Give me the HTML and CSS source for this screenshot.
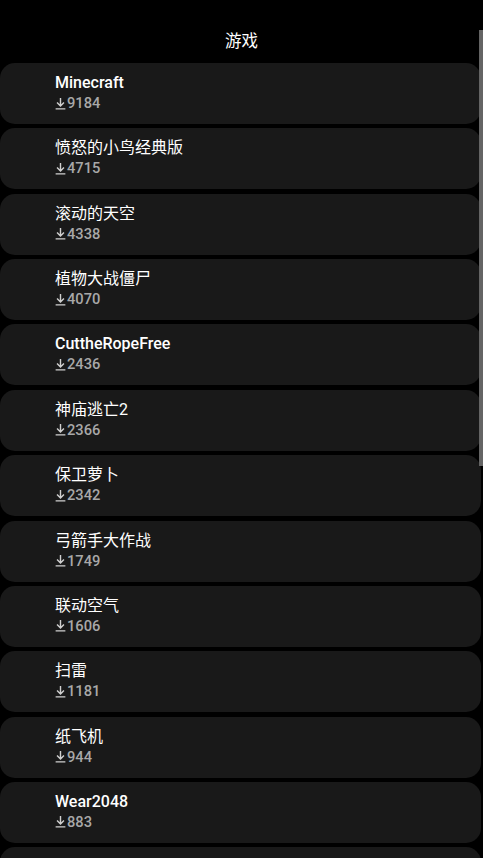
FILE: index.html
```html
<!DOCTYPE html>
<html lang="zh">
<head>
<meta charset="utf-8">
<title>游戏</title>
<link rel="stylesheet" href="styles.css">
</head>
<body>
<div class="screen">
  <header class="header">游戏</header>
  <ul class="list">
    <li class="card"><div class="name">Minecraft</div><div class="count"><svg class="dl" viewBox="0 0 10 12"><path d="M5 1v7M1.8 5l3.2 3.2L8.2 5M0.5 11h9" /></svg>9184</div></li>
    <li class="card"><div class="name cjk">愤怒的小鸟经典版</div><div class="count"><svg class="dl" viewBox="0 0 10 12"><path d="M5 1v7M1.8 5l3.2 3.2L8.2 5M0.5 11h9" /></svg>4715</div></li>
    <li class="card"><div class="name cjk">滚动的天空</div><div class="count"><svg class="dl" viewBox="0 0 10 12"><path d="M5 1v7M1.8 5l3.2 3.2L8.2 5M0.5 11h9" /></svg>4338</div></li>
    <li class="card"><div class="name cjk">植物大战僵尸</div><div class="count"><svg class="dl" viewBox="0 0 10 12"><path d="M5 1v7M1.8 5l3.2 3.2L8.2 5M0.5 11h9" /></svg>4070</div></li>
    <li class="card"><div class="name">CuttheRopeFree</div><div class="count"><svg class="dl" viewBox="0 0 10 12"><path d="M5 1v7M1.8 5l3.2 3.2L8.2 5M0.5 11h9" /></svg>2436</div></li>
    <li class="card"><div class="name cjk">神庙逃亡2</div><div class="count"><svg class="dl" viewBox="0 0 10 12"><path d="M5 1v7M1.8 5l3.2 3.2L8.2 5M0.5 11h9" /></svg>2366</div></li>
    <li class="card"><div class="name cjk">保卫萝卜</div><div class="count"><svg class="dl" viewBox="0 0 10 12"><path d="M5 1v7M1.8 5l3.2 3.2L8.2 5M0.5 11h9" /></svg>2342</div></li>
    <li class="card"><div class="name cjk">弓箭手大作战</div><div class="count"><svg class="dl" viewBox="0 0 10 12"><path d="M5 1v7M1.8 5l3.2 3.2L8.2 5M0.5 11h9" /></svg>1749</div></li>
    <li class="card"><div class="name cjk">联动空气</div><div class="count"><svg class="dl" viewBox="0 0 10 12"><path d="M5 1v7M1.8 5l3.2 3.2L8.2 5M0.5 11h9" /></svg>1606</div></li>
    <li class="card"><div class="name cjk">扫雷</div><div class="count"><svg class="dl" viewBox="0 0 10 12"><path d="M5 1v7M1.8 5l3.2 3.2L8.2 5M0.5 11h9" /></svg>1181</div></li>
    <li class="card"><div class="name cjk">纸飞机</div><div class="count"><svg class="dl" viewBox="0 0 10 12"><path d="M5 1v7M1.8 5l3.2 3.2L8.2 5M0.5 11h9" /></svg>944</div></li>
    <li class="card"><div class="name">Wear2048</div><div class="count"><svg class="dl" viewBox="0 0 10 12"><path d="M5 1v7M1.8 5l3.2 3.2L8.2 5M0.5 11h9" /></svg>883</div></li>
    <li class="card"><div class="name">&nbsp;</div><div class="count">&nbsp;</div></li>
  </ul>
  <div class="scrollbar"></div>
</div>
</body>
</html>
```
FILE: styles.css
```css
html, body {
  margin: 0;
  padding: 0;
  background: #000;
  height: 100%;
  overflow: hidden;
}
.screen {
  position: relative;
  width: 483px;
  height: 858px;
  overflow: hidden;
  font-family: Roboto, "Noto Sans CJK SC", sans-serif;
  color: #fff;
}
.header {
  height: 63px;
  box-sizing: border-box;
  padding-top: 31px;
  text-align: center;
  font-size: 16.5px;
  line-height: 22px;
  color: #fff;
}
.list {
  list-style: none;
  margin: 0;
  padding: 0;
  display: flex;
  flex-direction: column;
  gap: 4.36px;
}
.card {
  width: 481px;
  height: 61px;
  flex: none;
  box-sizing: border-box;
  background: #191919;
  border-radius: 15px;
  padding: 10px 0 0 55px;
}
.name {
  font-size: 16px;
  line-height: 20px;
  font-weight: 500;
  color: #fff;
  white-space: nowrap;
}
.name.cjk {
  font-weight: 400;
}
.count {
  display: flex;
  align-items: center;
  font-size: 14.7px;
  line-height: 20px;
  font-weight: 500;
  color: #a8a8a8;
}
.dl {
  width: 11px;
  height: 13px;
  margin-right: 1px;
  fill: none;
  stroke: #d0d0d0;
  stroke-width: 1.3;
}
.scrollbar {
  position: absolute;
  left: 479px;
  top: 30px;
  width: 4px;
  height: 436px;
  background: #646464;
}
```
